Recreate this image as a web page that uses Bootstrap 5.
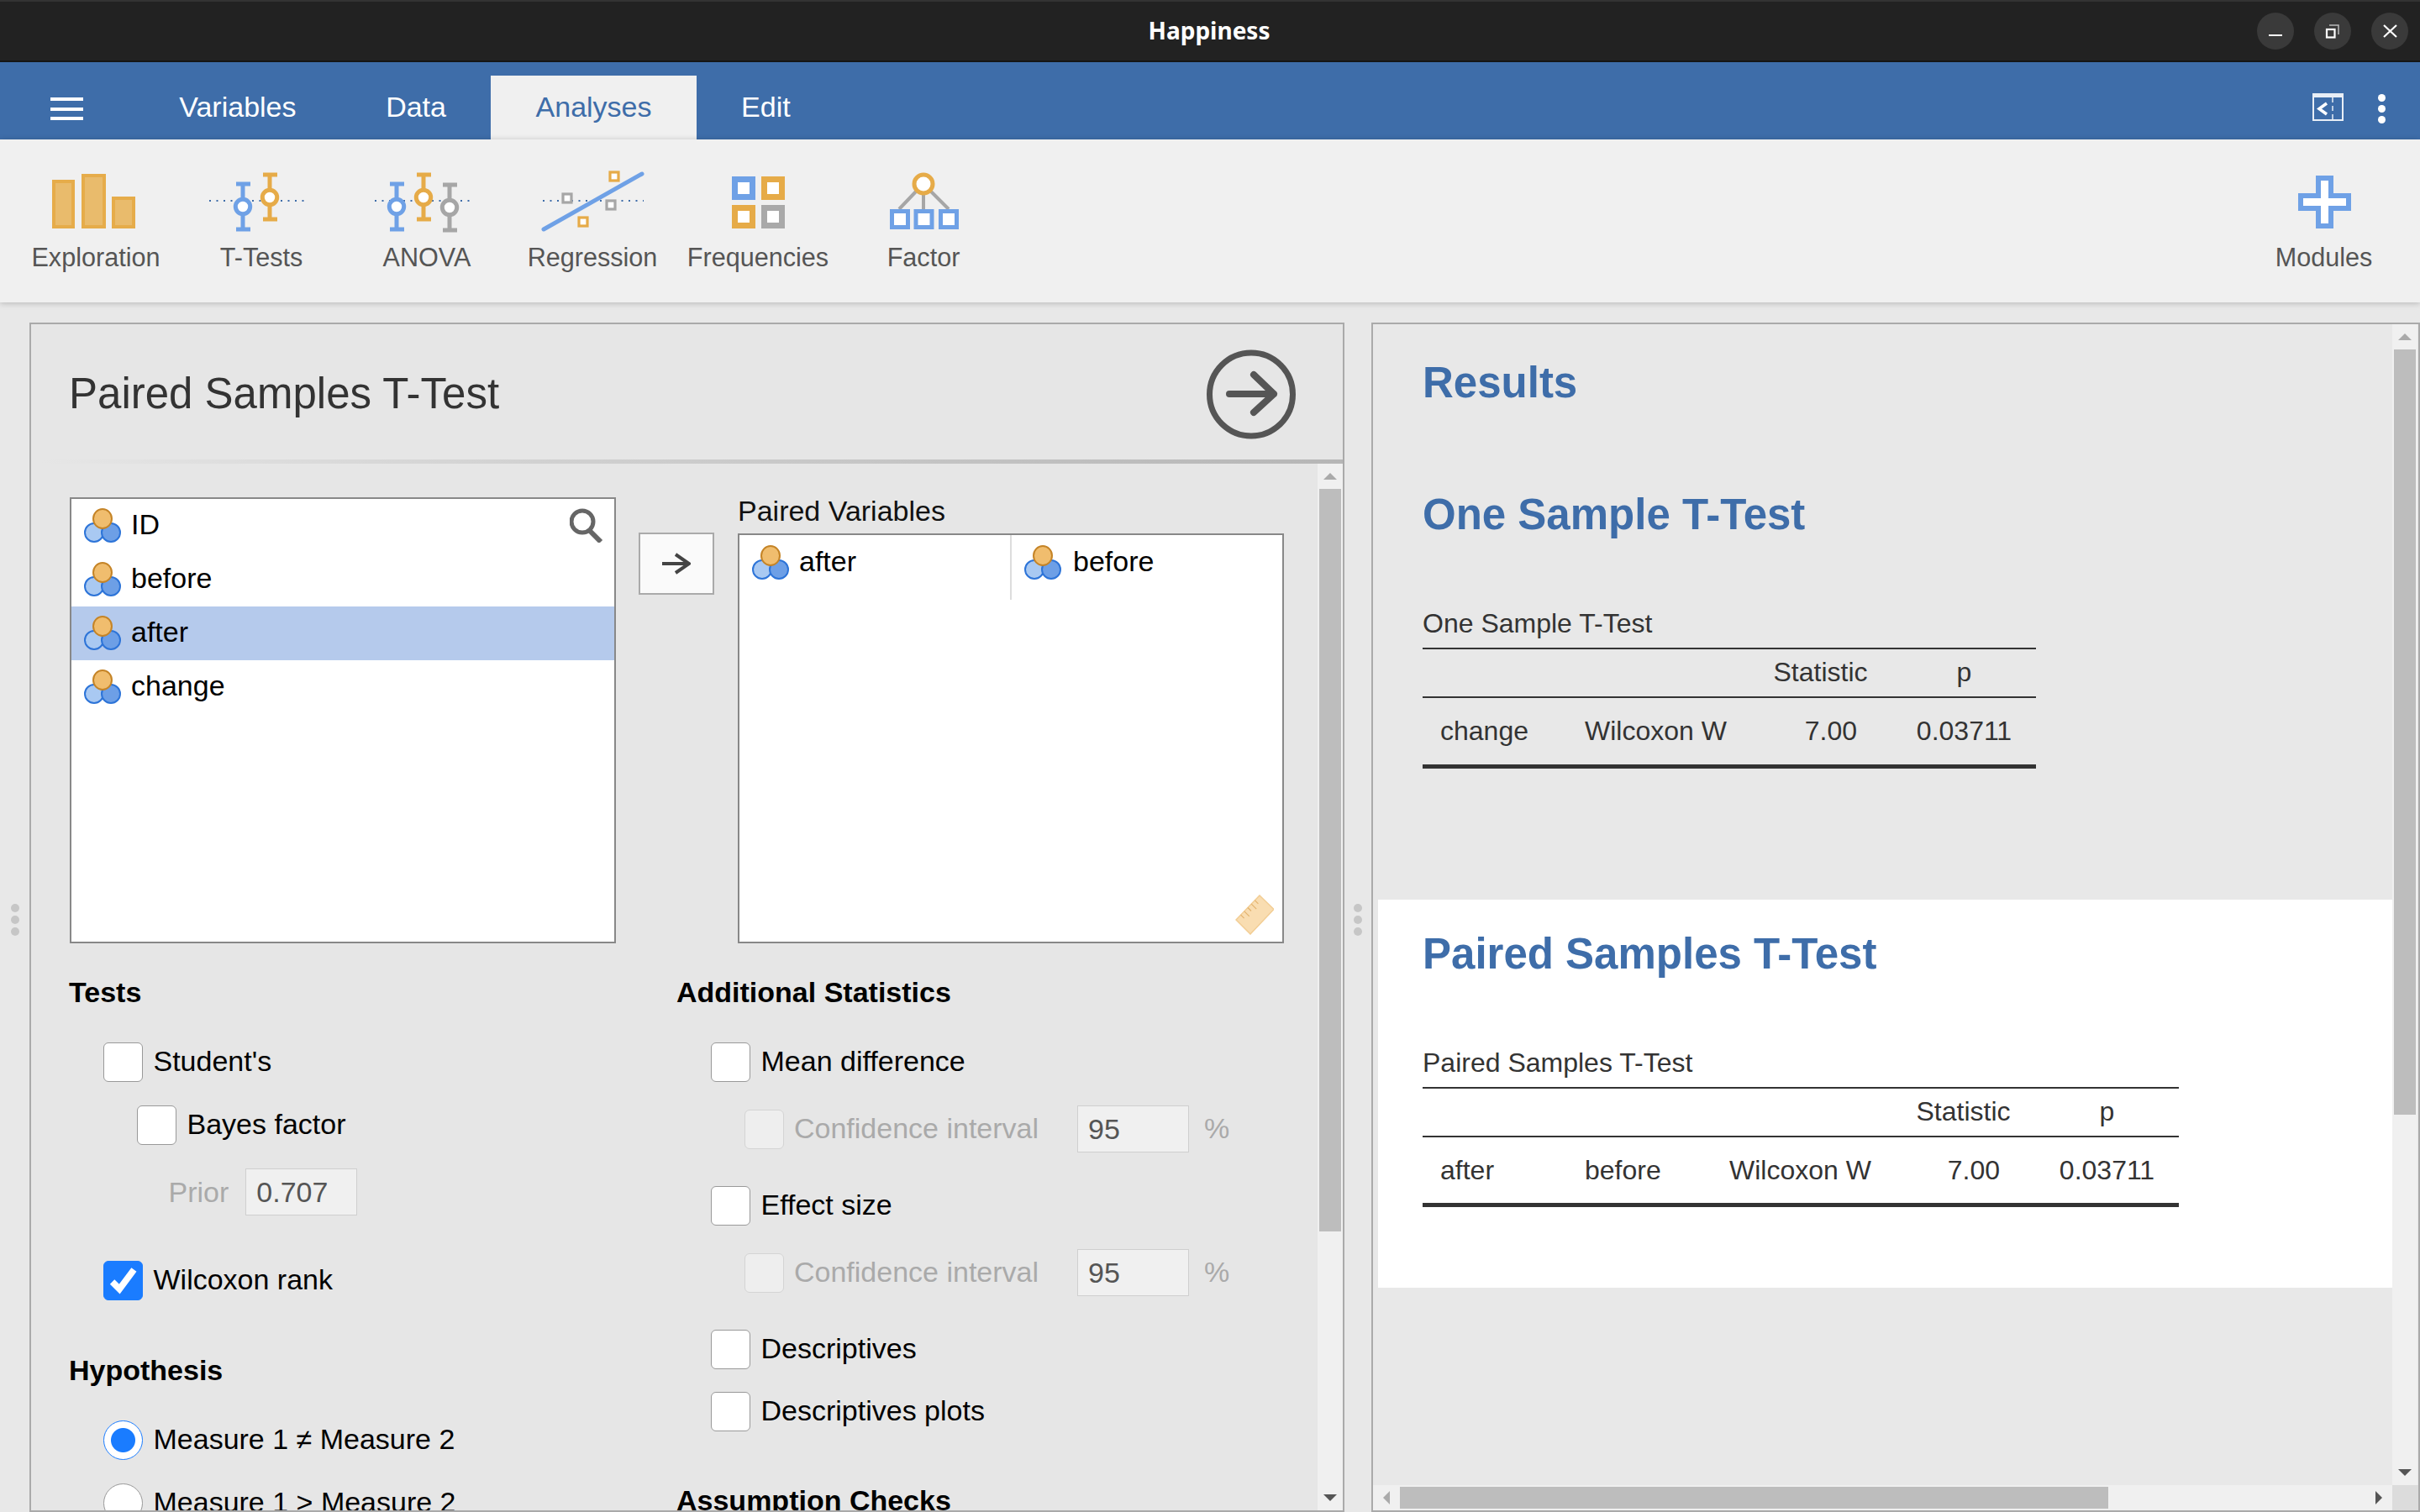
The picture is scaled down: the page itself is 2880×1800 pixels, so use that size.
<!DOCTYPE html>
<html lang="en">
<head>
  <meta charset="UTF-8">
  <title>Happiness</title>
  <link href="https://cdn.jsdelivr.net/npm/bootstrap@5.3.3/dist/css/bootstrap.min.css" rel="stylesheet">
  <style>
    html, body { height: 100%; }
    body {
      width: 2880px; height: 1800px; overflow: hidden; margin: 0;
      background-color: #e8e8e8;
      font-family: "Liberation Sans", Arial, sans-serif;
      font-size: 34px; line-height: 40px; color: #000;
    }
    /* window chrome */
    .win-bar { height: 74px; background: #222; border-top: 2px solid #333; border-bottom: 2px solid #151515; padding-right: 14px; }
    .win-title { flex: 1; padding-left: 192px; text-align: center; color: #fff; font: 700 28px/34px "Noto Sans", sans-serif; padding-bottom: 3px; }
    .win-btns { gap: 24px; }
    .win-btn { width: 44px; height: 44px; display: block; }

    /* blue menu */
    .app-bar { height: 92px; background: #3e6da9; }
    .burger { width: 160px; height: 92px; padding: 42px 0 0 60px; }
    .burger i { display: block; width: 39px; height: 4px; background: #fff; margin-bottom: 7.5px; }
    .tab-item { height: 76px; padding: 0 53.3px 2px; color: #fff; background: transparent; border: 0; border-radius: 0; font-size: 34px; line-height: 40px; display: flex; align-items: center; text-decoration: none; }
    .tab-item:hover { color: #fff; }
    .tab-item.tab-on { background: #f0f0f0; color: #3e6da9; }
    .app-right { margin-left: auto; height: 92px; padding: 15px 41px 0 0; gap: 41px; }
    .dot-menu { width: 9px; margin-top: 3px; }
    .dot-menu i { display: block; width: 9px; height: 9px; background: #fff; border-radius: 50%; margin-bottom: 4px; }

    /* ribbon */
    .ribbon { height: 194px; background: #f0f0f0; padding: 34px 16px 0 15.5px; position: relative; z-index: 2; box-shadow: 0 1px 7px rgba(0,0,0,.22); }
    .rib-btn { width: 197px; color: #555; font-size: 30.6px; line-height: 36px; }
    .rib-btn svg { width: 140px; height: 80px; margin-bottom: 8px; display: block; }

    /* panels */
    .work { height: 1440px; padding-top: 24px; }
    .gutter { flex: none; margin-top: 6px; gap: 4px; }
    .gutter i { display: block; width: 10px; height: 10px; border-radius: 50%; background: #c6c6c6; }
    .opt-panel { width: 1565px; height: 1416px; background: #e6e6e6; border: 2px solid #aaa; overflow: hidden; flex: none; }
    .opt-head { height: 161px; padding: 4px 56px 0 45px; }
    .opt-title { font-size: 51px; line-height: 60px; color: #333; font-weight: 400; margin: 0; }
    .run-ico { width: 106px; height: 107px; margin-top: 2px; display: block; }
    .opt-rule { height: 5px; margin-left: 11px; background: linear-gradient(to right, rgba(184,184,184,0), #d0d0d0 40%, #b6b6b6); }
    .opt-body { height: 1246px; }
    .opt-scroll { flex: 1; overflow: hidden; padding: 40px 0 0 45px; height: 100%; }

    .lists { height: 531px; padding-left: 1px; }
    .var-box { background: #fff; border: 2px solid #888; }
    .var-supplier { width: 650px; height: 531px; }
    .var-row.list-group-item { height: 64px; padding: 0 0 4px 15px; border: 0; border-radius: 0; background: transparent; color: #000; }
    .var-row.row-on { background: #b5caec; }
    .var-row svg, .pair-cell svg { width: 44px; height: 42px; margin-right: 12px; flex: none; }
    .var-row svg { margin-top: 4px; }
    .find-ico { position: absolute; top: 11px; right: 13px; width: 40px; height: 41px; }
    .move-btn.btn { width: 90px; height: 74px; margin: 42px 28px 0 27px; background: #fafafa; border: 2px solid #aaa; border-radius: 0; padding: 0; flex: none; }
    .move-btn svg { width: 34px; height: 26px; display: block; margin: 0 auto; }
    .target-col { width: 650px; margin-top: -4px; }
    .target-lbl { height: 47px; line-height: 40px; color: #111; }
    .var-target { height: 488px; position: relative; }
    .pair-cell { width: 323px; height: 77px; padding: 11px 0 0 15px; }
    .pair-cell svg { margin-top: 1px; }
    .pair-cell + .pair-cell { border-left: 2px solid #ddd; width: 325px; padding-left: 15px; }
    .pair-cell + .pair-cell svg { margin-right: 14px; }
    .ruler-ico { position: absolute; right: 10px; bottom: 8px; width: 46px; height: 48px; }

    .opt-cols { margin-top: 38px; }
    .opt-left { width: 723px; flex: none; }
    .opt-head2 { font-weight: 700; height: 40px; margin-bottom: 40px; }
    .opt-row { height: 47px; gap: 13px; padding-left: 40.5px; margin-bottom: 28px; }
    .opt-row label { margin: 0 0 3px; }
    .opt-row.sub1 { padding-left: 80.5px; }
    .opt-check.form-check-input { width: 47px; height: 47px; margin: 0; flex: none; border: 1.5px solid #999; border-radius: 6px; background-color: #fff; box-shadow: none; float: none; }
    .opt-check.form-check-input[type=radio] { border-radius: 50%; }
    .opt-check.form-check-input:checked[type=checkbox] {
      background-color: #1a7cff; border-color: #1a7cff; background-size: 100% 100%;
      background-image: url("data:image/svg+xml,%3csvg xmlns='http://www.w3.org/2000/svg' viewBox='0 0 47 47'%3e%3cpath fill='none' stroke='%23fff' stroke-width='8' d='M10 25l9 9 L37 10'/%3e%3c/svg%3e");
    }
    .opt-check.form-check-input:checked[type=radio] {
      border-color: #1a7cff; background-color: #fff;
      background-image: radial-gradient(circle, #1a7cff 14px, #fff 15px);
      background-size: 100% 100%;
    }
    .opt-check.form-check-input:disabled { background-color: #eee; border-color: #d4d4d4; opacity: 1; }
    .txt-off { color: #aaa; }
    .num-box.form-control { width: 133px; height: 56px; flex: none; padding: 0 0 0 12px; background: #f0f0f0; border: 1.5px solid #cfcfcf; border-radius: 0; color: #555; font-size: 34px; line-height: 40px; opacity: 1; }
    .prior-row { height: 56px; padding-left: 118.5px; gap: 20px; margin-bottom: 53px; }
    .ci-row { height: 56px; padding-left: 81px; gap: 12px; margin-bottom: 40px; }
    .ci-row .txt-off { margin-bottom: 2px; }
    .ci-row .ci-lbl { width: 325px; }
    .ci-row .num-box.form-control { margin-right: 6px; }
    .wil-row.opt-row { height: 48px; margin-bottom: 63px; }
    .hyp-head { margin-bottom: 40px; }
    .desc-row.opt-row { margin-bottom: 27px; }
    .stack-gap { margin-top: 62px; }

    /* fake scrollbars */
    .vbar { width: 30px; flex: none; background: #f0f0f0; height: 100%; }
    .vbar-btn { height: 30px; flex: none; }
    .vbar-thumb { margin: 0 2px; background: #bdbdbd; flex: none; }
    .tri-up { width: 0; height: 0; border: 8px solid transparent; border-top: 0; border-bottom: 8px solid #aaa; }
    .tri-down { width: 0; height: 0; border: 8px solid transparent; border-bottom: 0; border-top: 8px solid #555; }
    .tri-left { width: 0; height: 0; border: 8px solid transparent; border-left: 0; border-right: 8px solid #aaa; }
    .tri-right { width: 0; height: 0; border: 8px solid transparent; border-right: 0; border-left: 8px solid #555; }

    /* results */
    .res-panel { width: 1248px; height: 1416px; background: #e8e8e8; border: 2px solid #aaa; overflow: hidden; flex: none; }
    .res-main { height: 1382px; }
    .res-view { width: 1213px; flex: none; height: 100%; overflow: hidden; }
    .res-h { font-size: 51px; line-height: 60px; font-weight: 700; color: #3e6da9; margin: 0; }
    .res-top { padding: 40px 0 0 59px; }
    .res-sec2 { margin: 97px 0 0 0; }
    .res-cap { font-size: 32px; line-height: 38px; color: #333; margin: 80px 0 10px; }
    .res-white { margin: 156px 0 0 6px; height: 462px; background: #fff; padding: 35px 0 0 53px; }
    .table.res-tbl { table-layout: fixed; margin: 0; font-size: 32px; line-height: 38px; color: #333; --bs-table-bg: transparent; --bs-table-color: #333; }
    .table.res-tbl>:not(caption)>*>* { padding: 0; border: 0; background: transparent; color: #333; font-weight: 400; }
    .table.res-tbl thead tr { height: 58px; border-top: 2px solid #333; border-bottom: 2px solid #333; }
    .table.res-tbl tbody tr { height: 82px; border-bottom: 5px solid #333; }
    .table.res-tbl tbody td { vertical-align: middle; }
    .table.res-tbl>thead>tr>th { vertical-align: middle; text-align: center; padding-bottom: 2px; }
    .table.res-tbl>thead>tr>th.stat-th { padding-left: 4px; }
    .table.res-tbl .lp { padding-left: 21px; }
    .table.res-tbl .rp { padding-right: 42px; text-align: right; }
    .table.res-tbl .mid { text-align: center; }
    .hbar-row { height: 30px; }
    .hbar { width: 1213px; background: #f0f0f0; flex: none; }
    .hbar-btn { width: 32px; flex: none; }
    .hbar-thumb { width: 843px; margin: 2px 0; background: #bdbdbd; flex: none; }
    .bar-corner { width: 31px; background: #dcdcdc; flex: none; }
  </style>
</head>
<body>
  <svg width="0" height="0" class="position-absolute">
    <symbol id="nominal" viewBox="0 0 44 42">
      <circle cx="12" cy="29" r="11" fill="#a9c9f2" stroke="#2d74d8" stroke-width="2"/>
      <circle cx="32" cy="29" r="11" fill="#6d9fe6" stroke="#2d74d8" stroke-width="2"/>
      <ellipse cx="22" cy="12.5" rx="11" ry="11.5" fill="#f0bd6e" stroke="#c58427" stroke-width="2"/>
    </symbol>
  </svg>

  <!-- title bar -->
  <div class="win-bar d-flex align-items-center">
    <div class="win-title">Happiness</div>
    <div class="win-btns d-flex">
      <svg class="win-btn" viewBox="0 0 44 44"><circle cx="22" cy="22" r="22" fill="#3a3a3a"/><path d="M14 27H30" stroke="#fff" stroke-width="2"/></svg>
      <svg class="win-btn" viewBox="0 0 44 44"><circle cx="22" cy="22" r="22" fill="#3a3a3a"/><path d="M18 15H29V26" fill="none" stroke="#bbb" stroke-width="1.5"/><rect x="15" y="20" width="9.5" height="9.5" fill="none" stroke="#fff" stroke-width="2.2"/></svg>
      <svg class="win-btn" viewBox="0 0 44 44"><circle cx="22" cy="22" r="22" fill="#3a3a3a"/><path d="M15 15L30 29M30 15L15 29" stroke="#fff" stroke-width="2.2"/></svg>
    </div>
  </div>

  <!-- menu -->
  <div class="app-bar d-flex align-items-end">
    <div class="burger"><i></i><i></i><i></i></div>
    <ul class="nav align-items-end">
      <li class="nav-item"><a class="tab-item" href="#">Variables</a></li>
      <li class="nav-item"><a class="tab-item" href="#">Data</a></li>
      <li class="nav-item"><a class="tab-item tab-on" href="#">Analyses</a></li>
      <li class="nav-item"><a class="tab-item" href="#">Edit</a></li>
    </ul>
    <div class="app-right d-flex align-items-center">
      <svg width="37" height="33" viewBox="0 0 37 33"><rect x="1" y="1" width="35" height="31" fill="none" stroke="#e8eef6" stroke-width="2"/><rect x="1" y="1" width="35" height="4" fill="#e8eef6"/><path d="M17 12L8 18.5L17 25" fill="none" stroke="#fff" stroke-width="3.5"/><path d="M24 5V32" stroke="#e8eef6" stroke-width="1.5" stroke-dasharray="6 4"/></svg>
      <div class="dot-menu"><i></i><i></i><i class="mb-0"></i></div>
    </div>
  </div>

  <!-- ribbon -->
  <div class="ribbon d-flex">
    <div class="rib-btn d-flex flex-column align-items-center">
      <svg viewBox="0 0 140 80"><g fill="#e9bb6c" stroke="#e6ac4a" stroke-width="4"><rect x="20" y="16" width="23" height="54"/><rect x="55" y="9" width="25" height="61"/><rect x="91" y="36" width="24" height="34"/></g></svg>
      <span>Exploration</span>
    </div>
    <div class="rib-btn d-flex flex-column align-items-center">
      <svg viewBox="0 0 140 80">
        <path d="M8 39H127" stroke="#3e6da9" stroke-width="2" stroke-dasharray="2 6.5"/>
        <g stroke="#6fa1e6" fill="#fff"><path d="M48 19V73" stroke-width="5"/><path d="M40 19H57M40 73H57" stroke-width="5"/><circle cx="48" cy="46" r="8.7" stroke-width="5"/></g>
        <g stroke="#e6ab48" fill="#fff"><path d="M80 8V61" stroke-width="5"/><path d="M72 8H89M72 61H89" stroke-width="5"/><circle cx="80" cy="35" r="8.7" stroke-width="5"/></g>
      </svg>
      <span>T-Tests</span>
    </div>
    <div class="rib-btn d-flex flex-column align-items-center">
      <svg viewBox="0 0 140 80">
        <path d="M8 39H127" stroke="#3e6da9" stroke-width="2" stroke-dasharray="2 6.5"/>
        <g stroke="#6fa1e6" fill="#fff"><path d="M34 19V73" stroke-width="5"/><path d="M26 19H43M26 73H43" stroke-width="5"/><circle cx="34" cy="46" r="8.7" stroke-width="5"/></g>
        <g stroke="#e6ab48" fill="#fff"><path d="M66 8V61" stroke-width="5"/><path d="M58 8H75M58 61H75" stroke-width="5"/><circle cx="66" cy="35" r="8.7" stroke-width="5"/></g>
        <g stroke="#a6a6a6" fill="#fff"><path d="M97 20V74" stroke-width="5"/><path d="M89 20H106M89 74H106" stroke-width="5"/><circle cx="97" cy="47" r="8.7" stroke-width="5"/></g>
      </svg>
      <span>ANOVA</span>
    </div>
    <div class="rib-btn d-flex flex-column align-items-center">
      <svg viewBox="0 0 140 80">
        <path d="M11 39H131" stroke="#3e6da9" stroke-width="2" stroke-dasharray="2 6.5"/>
        <path d="M12 73L129 7" stroke="#6fa1e6" stroke-width="5" stroke-linecap="round"/>
        <g fill="#fff" stroke-width="3.2"><rect x="91" y="5" width="10" height="10" stroke="#e6ab48"/><rect x="35" y="31" width="10" height="10" stroke="#a6a6a6"/><rect x="87" y="39" width="10" height="10" stroke="#a6a6a6"/><rect x="54" y="59" width="10" height="10" stroke="#e6ab48"/></g>
      </svg>
      <span>Regression</span>
    </div>
    <div class="rib-btn d-flex flex-column align-items-center">
      <svg viewBox="0 0 140 80"><g fill="#fff" stroke-width="7"><rect x="42.5" y="13.5" width="21" height="21" stroke="#6fa1e6"/><rect x="77.5" y="13.5" width="21" height="21" stroke="#e6ab48"/><rect x="42.5" y="47.5" width="21" height="21" stroke="#e6ab48"/><rect x="77.5" y="47.5" width="21" height="21" stroke="#a9a9a9"/></g></svg>
      <span>Frequencies</span>
    </div>
    <div class="rib-btn d-flex flex-column align-items-center">
      <svg viewBox="0 0 140 80">
        <path d="M61 28L41 49M70 32V49M79 28L100 49" stroke="#a6a6a6" stroke-width="4"/>
        <circle cx="70" cy="19" r="11" fill="#fff" stroke="#e6ab48" stroke-width="5"/>
        <g fill="#fff" stroke="#6fa1e6" stroke-width="5"><rect x="32.5" y="51.5" width="19" height="19"/><rect x="61" y="51.5" width="19" height="19"/><rect x="90.5" y="51.5" width="19" height="19"/></g>
      </svg>
      <span>Factor</span>
    </div>
    <div class="rib-btn d-flex flex-column align-items-center ms-auto">
      <svg viewBox="0 0 140 80"><path d="M63 12H78V33H99V48H78V69H63V48H42V33H63Z" fill="#fff" stroke="#6fa1e6" stroke-width="6"/></svg>
      <span>Modules</span>
    </div>
  </div>

  <!-- work area -->
  <div class="work d-flex">
    <div class="gutter d-flex flex-column justify-content-center align-items-center" style="width:35px"><i></i><i></i><i></i></div>

    <div class="opt-panel">
      <div class="opt-head d-flex align-items-center justify-content-between">
        <h2 class="opt-title">Paired Samples T-Test</h2>
        <svg class="run-ico" viewBox="0 0 106 107"><circle cx="53" cy="53.5" r="49.5" fill="none" stroke="#555" stroke-width="7"/><path d="M27 53H80M56 30L80 53L56 75" fill="none" stroke="#555" stroke-width="8" stroke-linecap="round" stroke-linejoin="round"/></svg>
      </div>
      <div class="opt-rule"></div>
      <div class="opt-body d-flex">
        <div class="opt-scroll">
          <div class="lists d-flex align-items-start">
            <div class="var-box var-supplier position-relative">
              <ul class="list-group list-group-flush">
                <li class="list-group-item var-row d-flex align-items-center"><svg><use href="#nominal"/></svg>ID</li>
                <li class="list-group-item var-row d-flex align-items-center"><svg><use href="#nominal"/></svg>before</li>
                <li class="list-group-item var-row row-on d-flex align-items-center"><svg><use href="#nominal"/></svg>after</li>
                <li class="list-group-item var-row d-flex align-items-center"><svg><use href="#nominal"/></svg>change</li>
              </ul>
              <svg class="find-ico" viewBox="0 0 40 41"><circle cx="15" cy="16" r="13" fill="none" stroke="#666" stroke-width="5"/><path d="M24 27L37 40" stroke="#666" stroke-width="6"/></svg>
            </div>
            <button class="btn move-btn" type="button"><svg viewBox="0 0 34 26"><path d="M0 13H32M16 2L32 13L16 24" fill="none" stroke="#444" stroke-width="4"/></svg></button>
            <div class="target-col">
              <div class="target-lbl">Paired Variables</div>
              <div class="var-box var-target">
                <div class="d-flex">
                  <div class="pair-cell d-flex"><svg><use href="#nominal"/></svg>after</div>
                  <div class="pair-cell d-flex"><svg><use href="#nominal"/></svg>before</div>
                </div>
                <svg class="ruler-ico" viewBox="0 0 46 48"><path d="M29 1L46 17.5L18 47L1 30Z" fill="#f9ddb1" stroke="#f2cd94" stroke-width="1.5"/><path d="M23.4 6.8l4 4M19.2 11.2l6 6M15 15.5l4 4M10.8 19.9l6 6M6.6 24.2l4 4" stroke="#e3b26e" stroke-width="1.2"/></svg>
              </div>
            </div>
          </div>

          <div class="opt-cols d-flex">
            <div class="opt-left">
              <div class="opt-head2">Tests</div>
              <div class="opt-row d-flex align-items-center"><input class="form-check-input opt-check" type="checkbox"><label>Student's</label></div>
              <div class="opt-row sub1 d-flex align-items-center"><input class="form-check-input opt-check" type="checkbox"><label>Bayes factor</label></div>
              <div class="prior-row d-flex align-items-center"><span class="txt-off">Prior</span><input class="form-control num-box" type="text" value="0.707" disabled></div>
              <div class="opt-row wil-row d-flex align-items-center"><input class="form-check-input opt-check" type="checkbox" checked><label>Wilcoxon rank</label></div>
              <div class="opt-head2 hyp-head">Hypothesis</div>
              <div class="opt-row d-flex align-items-center"><input class="form-check-input opt-check" type="radio" name="hyp" checked><label>Measure 1 ≠ Measure 2</label></div>
              <div class="opt-row d-flex align-items-center"><input class="form-check-input opt-check" type="radio" name="hyp"><label>Measure 1 &gt; Measure 2</label></div>
            </div>
            <div class="opt-right">
              <div class="opt-head2">Additional Statistics</div>
              <div class="opt-row d-flex align-items-center"><input class="form-check-input opt-check" type="checkbox"><label>Mean difference</label></div>
              <div class="ci-row d-flex align-items-center"><input class="form-check-input opt-check" type="checkbox" disabled><span class="txt-off ci-lbl">Confidence interval</span><input class="form-control num-box" type="text" value="95" disabled><span class="txt-off">%</span></div>
              <div class="opt-row d-flex align-items-center"><input class="form-check-input opt-check" type="checkbox"><label>Effect size</label></div>
              <div class="ci-row d-flex align-items-center"><input class="form-check-input opt-check" type="checkbox" disabled><span class="txt-off ci-lbl">Confidence interval</span><input class="form-control num-box" type="text" value="95" disabled><span class="txt-off">%</span></div>
              <div class="opt-row desc-row d-flex align-items-center"><input class="form-check-input opt-check" type="checkbox"><label>Descriptives</label></div>
              <div class="opt-row d-flex align-items-center mb-0"><input class="form-check-input opt-check" type="checkbox"><label>Descriptives plots</label></div>
              <div class="opt-head2 stack-gap">Assumption Checks</div>
            </div>
          </div>
        </div>
        <div class="vbar d-flex flex-column">
          <div class="vbar-btn d-flex align-items-center justify-content-center"><span class="tri-up"></span></div>
          <div class="vbar-thumb" style="height:884px"></div>
          <div class="mt-auto vbar-btn d-flex align-items-center justify-content-center"><span class="tri-down"></span></div>
        </div>
      </div>
    </div>

    <div class="gutter d-flex flex-column justify-content-center align-items-center" style="width:32px"><i></i><i></i><i></i></div>

    <div class="res-panel">
      <div class="res-main d-flex">
        <div class="res-view">
          <div class="res-top">
            <h1 class="res-h">Results</h1>
            <div class="res-sec2">
              <h2 class="res-h">One Sample T-Test</h2>
              <div class="res-cap">One Sample T-Test</div>
              <table class="table res-tbl" style="width:730px">
                <colgroup><col style="width:172px"><col style="width:212px"><col style="width:175px"><col style="width:171px"></colgroup>
                <thead><tr><th></th><th></th><th class="stat-th">Statistic</th><th>p</th></tr></thead>
                <tbody><tr><td class="lp">change</td><td class="lp">Wilcoxon W</td><td class="rp">7.00</td><td class="mid">0.03711</td></tr></tbody>
              </table>
            </div>
          </div>
          <div class="res-white">
            <h2 class="res-h">Paired Samples T-Test</h2>
            <div class="res-cap">Paired Samples T-Test</div>
            <table class="table res-tbl" style="width:900px">
              <colgroup><col style="width:172px"><col style="width:172px"><col style="width:210px"><col style="width:175px"><col style="width:171px"></colgroup>
              <thead><tr><th></th><th></th><th></th><th class="stat-th">Statistic</th><th>p</th></tr></thead>
              <tbody><tr><td class="lp">after</td><td class="lp">before</td><td class="lp">Wilcoxon W</td><td class="rp">7.00</td><td class="mid">0.03711</td></tr></tbody>
            </table>
          </div>
        </div>
        <div class="vbar d-flex flex-column">
          <div class="vbar-btn d-flex align-items-center justify-content-center"><span class="tri-up"></span></div>
          <div class="vbar-thumb" style="height:911px"></div>
          <div class="mt-auto vbar-btn d-flex align-items-center justify-content-center"><span class="tri-down"></span></div>
        </div>
      </div>
      <div class="hbar-row d-flex">
        <div class="hbar d-flex">
          <div class="hbar-btn d-flex align-items-center justify-content-center"><span class="tri-left"></span></div>
          <div class="hbar-thumb"></div>
          <div class="ms-auto hbar-btn d-flex align-items-center justify-content-center"><span class="tri-right"></span></div>
        </div>
        <div class="bar-corner"></div>
      </div>
    </div>
  </div>

  <script src="https://cdn.jsdelivr.net/npm/bootstrap@5.3.3/dist/js/bootstrap.bundle.min.js"></script>
</body>
</html>
